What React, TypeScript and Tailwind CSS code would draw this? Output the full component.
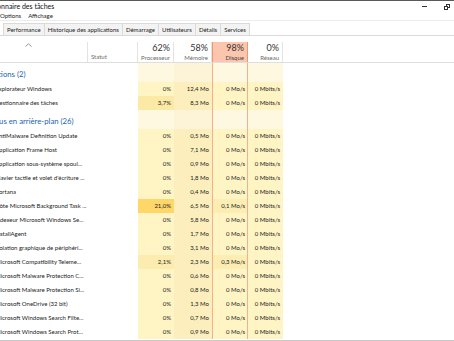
import React from 'react';

type Row = { name: string; cpu: string; mem: string; disk: string; net: string; cpuBg?: string; diskBg?: string };

const apps: Row[] = [
  { name: 'Explorateur Windows', cpu: '0%', mem: '12,4 Mo', disk: '0 Mo/s', net: '0 Mbits/s' },
  { name: 'Gestionnaire des tâches', cpu: '3,7%', mem: '8,3 Mo', disk: '0 Mo/s', net: '0 Mbits/s', cpuBg: 'bg-[#fbe9a6]' },
];

const background: Row[] = [
  { name: 'AntiMalware Definition Update', cpu: '0%', mem: '0,5 Mo', disk: '0 Mo/s', net: '0 Mbits/s' },
  { name: 'Application Frame Host', cpu: '0%', mem: '7,1 Mo', disk: '0 Mo/s', net: '0 Mbits/s' },
  { name: 'Application sous-système spoul...', cpu: '0%', mem: '0,9 Mo', disk: '0 Mo/s', net: '0 Mbits/s' },
  { name: "Clavier tactile et volet d'écriture ...", cpu: '0%', mem: '1,8 Mo', disk: '0 Mo/s', net: '0 Mbits/s' },
  { name: 'Cortana', cpu: '0%', mem: '0,4 Mo', disk: '0 Mo/s', net: '0 Mbits/s' },
  { name: 'Hôte Microsoft Background Task ...', cpu: '21,0%', mem: '6,5 Mo', disk: '0,1 Mo/s', net: '0 Mbits/s', cpuBg: 'bg-[#ffd669]', diskBg: 'bg-[#fcedb3]' },
  { name: 'Indexeur Microsoft Windows Se...', cpu: '0%', mem: '5,8 Mo', disk: '0 Mo/s', net: '0 Mbits/s' },
  { name: 'InstallAgent', cpu: '0%', mem: '1,7 Mo', disk: '0 Mo/s', net: '0 Mbits/s' },
  { name: 'Isolation graphique de périphéri...', cpu: '0%', mem: '3,1 Mo', disk: '0 Mo/s', net: '0 Mbits/s' },
  { name: 'Microsoft Compatibility Teleme...', cpu: '2,1%', mem: '2,3 Mo', disk: '0,3 Mo/s', net: '0 Mbits/s', cpuBg: 'bg-[#fcecb0]', diskBg: 'bg-[#fcedb3]' },
  { name: 'Microsoft Malware Protection C...', cpu: '0%', mem: '0,6 Mo', disk: '0 Mo/s', net: '0 Mbits/s' },
  { name: 'Microsoft Malware Protection Si...', cpu: '0%', mem: '0,8 Mo', disk: '0 Mo/s', net: '0 Mbits/s' },
  { name: 'Microsoft OneDrive (32 bit)', cpu: '0%', mem: '1,3 Mo', disk: '0 Mo/s', net: '0 Mbits/s' },
  { name: 'Microsoft Windows Search Filte...', cpu: '0%', mem: '0,7 Mo', disk: '0 Mo/s', net: '0 Mbits/s' },
  { name: 'Microsoft Windows Search Prot...', cpu: '0%', mem: '0,9 Mo', disk: '0 Mo/s', net: '0 Mbits/s' },
];

const cols = 'grid grid-cols-[88px_50px_36px_38px_36px_35px_1fr]';

const tabs = ['Performance', 'Historique des applications', 'Démarrage', 'Utilisateurs', 'Détails', 'Services'];

const GroupRow = ({ label }: { label: string }) => (
  <div className={`${cols} h-[19px]`}>
    <div className="col-span-2 overflow-hidden whitespace-nowrap flex items-end pb-[3px]">
      <span className="-ml-[27px] text-[7.75px] leading-none text-[#1e5fb4]">{label}</span>
    </div>
    <div className="bg-[#fff8e0]" />
    <div className="bg-[#fdf3d6]" />
    <div className="bg-[#fff8e0] border-x border-[#f5b08c]" />
    <div className="bg-[#fff8e0]" />
    <div />
  </div>
);

const ProcRow = ({ r }: { r: Row }) => (
  <div className={`${cols} h-[14px] text-[6px] leading-none text-[#222]`}>
    <div className="col-span-2 overflow-hidden whitespace-nowrap flex items-center">
      <span className="-ml-[5px]">{r.name}</span>
    </div>
    <div className={`flex items-center justify-end pr-[3px] ${r.cpuBg ?? 'bg-[#fff4c4]'}`}>{r.cpu}</div>
    <div className="flex items-center justify-end pr-[3px] bg-[#fcefbd]">{r.mem}</div>
    <div className={`flex items-center justify-end pr-[2px] border-x border-[#f5b08c] ${r.diskBg ?? 'bg-[#fff4c4]'}`}>{r.disk}</div>
    <div className="flex items-center justify-end pr-[3px] bg-[#fff4c4]">{r.net}</div>
    <div />
  </div>
);

const HeadCell = ({ pct, label, hot }: { pct: string; label: string; hot?: boolean }) => (
  <div
    className={`flex flex-col items-end justify-between pr-[3px] pt-[1px] pb-[1px] ${
      hot ? 'bg-[#fcc6ae] border-x border-[#f2956c] text-[#222]' : 'border-r border-[#e3e3e3]'
    }`}
  >
    <span className="text-[9px] leading-none text-[#333]">{pct}</span>
    <span className={`text-[6px] leading-none ${hot ? 'text-[#444]' : 'text-[#6b6b6b]'}`}>{label}</span>
  </div>
);

export default function App() {
  return (
    <div className="w-[454px] h-[341px] overflow-hidden bg-white font-['Lato',sans-serif] text-[#222] flex flex-col">
      {/* title bar */}
      <div className="h-[12px] border-t border-[#5a5a5a] flex items-center justify-between shrink-0">
        <span className="-ml-[19px] text-[7px] leading-none text-[#111] whitespace-nowrap">Gestionnaire des tâches</span>
        <div className="flex items-center gap-[17px] pr-[4px]">
          <div className="w-[5px] h-px bg-[#333]" />
          <div className="relative w-[6px] h-[6px]">
            <div className="absolute right-0 top-0 w-[4px] h-[4px] border border-[#333]" />
            <div className="absolute left-0 bottom-0 w-[4px] h-[4px] border border-[#333] bg-white" />
          </div>
        </div>
      </div>

      {/* menu */}
      <div className="h-[9px] border-b border-[#ececec] flex items-center gap-[7px] text-[6px] leading-none shrink-0 pb-[1px]">
        <span>Options</span>
        <span>Affichage</span>
      </div>

      {/* tabs */}
      <div className="mt-[2px] h-[13px] border-b border-[#dadada] flex items-stretch shrink-0">
        <div className="w-[4px] border-r border-[#dadada] bg-white" />
        {tabs.map((t) => (
          <div
            key={t}
            className="px-[3px] border-r border-t border-[#dadada] bg-[#f3f3f3] flex items-center text-[6px] leading-none whitespace-nowrap"
          >
            {t}
          </div>
        ))}
      </div>

      {/* header */}
      <div className={`${cols} h-[27px] pt-[6px] border-b border-[#dedede] shrink-0`}>
        <div className="border-r border-[#e3e3e3] relative flex justify-center">
          <svg width="7" height="4" viewBox="0 0 7 4" className="mt-[1px] -ml-[30px]">
            <path d="M0.5 3.5 L3.5 0.8 L6.5 3.5" fill="none" stroke="#888" strokeWidth="0.9" />
          </svg>
        </div>
        <div className="border-r border-[#e3e3e3] flex items-end pl-[3px] pb-[2px]">
          <span className="text-[6px] leading-none text-[#6b6b6b]">Statut</span>
        </div>
        <HeadCell pct="62%" label="Processeur" />
        <HeadCell pct="58%" label="Mémoire" />
        <HeadCell pct="98%" label="Disque" hot />
        <HeadCell pct="0%" label="Réseau" />
        <div />
      </div>

      {/* body */}
      <div className="flex-1 overflow-hidden border-b border-[#c8c8c8]">
        <GroupRow label="Applications (2)" />
        {apps.map((r) => (
          <ProcRow key={r.name} r={r} />
        ))}
        <GroupRow label="Processus en arrière-plan (26)" />
        {background.map((r) => (
          <ProcRow key={r.name} r={r} />
        ))}
      </div>
    </div>
  );
}
